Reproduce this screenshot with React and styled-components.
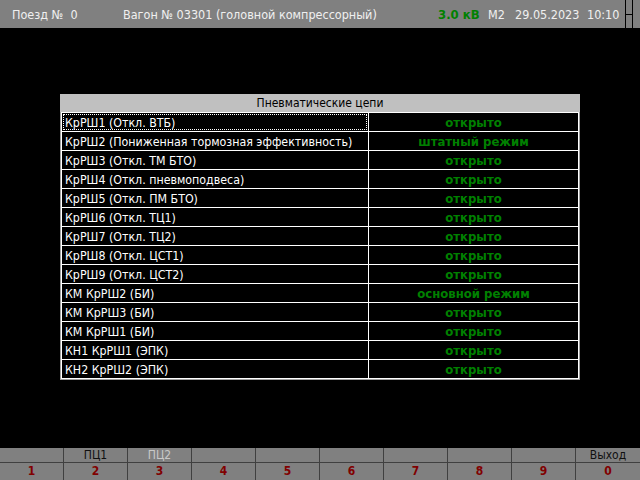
import React from "react"
import styled, { createGlobalStyle } from "styled-components"

const GlobalStyle = createGlobalStyle`
  html, body {
    margin: 0;
    padding: 0;
    background: #000;
  }
  body {
    font-family: "DejaVu Sans Condensed", "DejaVu Sans", "Liberation Sans", sans-serif;
    font-stretch: condensed;
    font-size: 12px;
  }
`

const ROWS = [
  ["КрРШ1 (Откл. ВТБ)", "открыто"],
  ["КрРШ2 (Пониженная тормозная эффективность)", "штатный режим"],
  ["КрРШ3 (Откл. ТМ БТО)", "открыто"],
  ["КрРШ4 (Откл. пневмоподвеса)", "открыто"],
  ["КрРШ5 (Откл. ПМ БТО)", "открыто"],
  ["КрРШ6 (Откл. ТЦ1)", "открыто"],
  ["КрРШ7 (Откл. ТЦ2)", "открыто"],
  ["КрРШ8 (Откл. ЦСТ1)", "открыто"],
  ["КрРШ9 (Откл. ЦСТ2)", "открыто"],
  ["КМ КрРШ2 (БИ)", "основной режим"],
  ["КМ КрРШ3 (БИ)", "открыто"],
  ["КМ КрРШ1 (БИ)", "открыто"],
  ["КН1 КрРШ1 (ЭПК)", "открыто"],
  ["КН2 КрРШ2 (ЭПК)", "открыто"],
]

const KEYS = [
  { label: "", num: "1" },
  { label: "ПЦ1", num: "2" },
  { label: "ПЦ2", num: "3", dim: true },
  { label: "", num: "4" },
  { label: "", num: "5" },
  { label: "", num: "6" },
  { label: "", num: "7" },
  { label: "", num: "8" },
  { label: "", num: "9" },
  { label: "Выход", num: "0" },
]

export default function App() {
  return (
    <>
      <GlobalStyle />
      <Screen>
        <TopBar>
          <TopItem $w={111}>Поезд №&nbsp; 0</TopItem>
          <TopItem $w={315}>Вагон № 03301 (головной компрессорный)</TopItem>
          <Voltage>3.0 кВ</Voltage>
          <TopItem $w={27}>М2</TopItem>
          <TopItem $w={72}>29.05.2023</TopItem>
          <TopItem $w={38}>10:10</TopItem>
          <Scroller>
            <ScrollMark />
          </Scroller>
        </TopBar>

        <Main>
          <Panel>
            <PanelTitle>Пневматические цепи</PanelTitle>
            <Grid>
              {ROWS.map(([name, state], i) => (
                <React.Fragment key={i}>
                  <NameCell $focused={i === 0}>{name}</NameCell>
                  <StateCell>{state}</StateCell>
                </React.Fragment>
              ))}
            </Grid>
          </Panel>
        </Main>

        <KeyBar>
          {KEYS.map((k) => (
            <Key key={k.num}>
              <KeyLabel $dim={k.dim}>{k.label}</KeyLabel>
              <KeyNum>{k.num}</KeyNum>
            </Key>
          ))}
        </KeyBar>
      </Screen>
    </>
  )
}

const Screen = styled.div`
  width: 640px;
  height: 480px;
  display: flex;
  flex-direction: column;
  background: #000;
  overflow: hidden;
`

const TopBar = styled.div`
  height: 28px;
  flex-shrink: 0;
  background: #808080;
  display: flex;
  align-items: center;
  padding-left: 12px;
  color: #f0f0f0;
  white-space: nowrap;
  font-size: 12.5px;
`

const TopItem = styled.div`
  width: ${(p) => p.$w}px;
  flex-shrink: 0;
`

const Voltage = styled.div`
  width: 50px;
  flex-shrink: 0;
  color: #008000;
  font-weight: bold;
  font-size: 13px;
`

const Scroller = styled.div`
  margin-left: auto;
  align-self: stretch;
  width: 6px;
  margin-right: 7px;
  border-left: 1px solid #000;
  border-right: 1px solid #000;
  display: flex;
  align-items: center;
`

const ScrollMark = styled.div`
  width: 100%;
  height: 1px;
  background: #000;
`

const Main = styled.div`
  flex: 1;
  padding: 66px 0 0 60px;
`

const Panel = styled.div`
  width: 520px;
`

const PanelTitle = styled.div`
  height: 18px;
  line-height: 18px;
  background: #c0c0c0;
  color: #000;
  text-align: center;
`

const Grid = styled.div`
  display: grid;
  grid-template-columns: 306px 1fr;
  border: 1px solid #a0a0a0;
  border-top: none;
  background: #fff;
  gap: 1px;
  padding: 1px;
`

const NameCell = styled.div`
  height: 18px;
  line-height: 20px;
  background: #000;
  color: #fff;
  font-size: 12.3px;
  padding-left: 3px;
  white-space: nowrap;
  overflow: hidden;
  outline: ${(p) => (p.$focused ? "1px dotted #fff" : "none")};
  outline-offset: -2px;
`

const StateCell = styled.div`
  height: 18px;
  line-height: 20px;
  background: #000;
  color: #008000;
  font-weight: bold;
  font-size: 13px;
  text-align: center;
  white-space: nowrap;
`

const KeyBar = styled.div`
  height: 32px;
  flex-shrink: 0;
  display: grid;
  grid-template-columns: repeat(10, 64px);
  background: #808080;
`

const Key = styled.div`
  display: grid;
  grid-template-rows: 15px 17px;
  border-right: 1px solid #404040;
  text-align: center;

  &:last-child {
    border-right: none;
  }
`

const KeyLabel = styled.div`
  border-bottom: 1px solid #404040;
  line-height: 14px;
  color: ${(p) => (p.$dim ? "#c8c8c8" : "#101010")};
`

const KeyNum = styled.div`
  line-height: 17px;
  color: #800000;
  font-weight: bold;
`
